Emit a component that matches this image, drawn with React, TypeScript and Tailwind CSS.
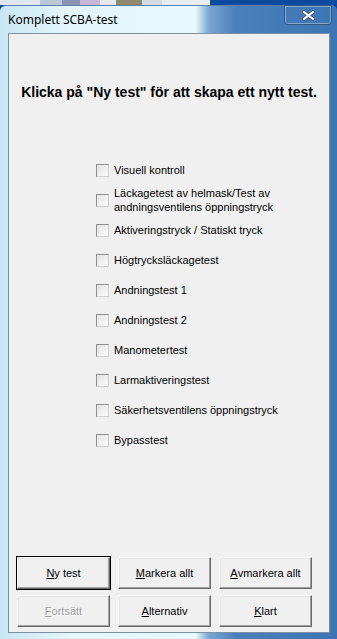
import React from 'react';

const tests: string[][] = [
  ['Visuell kontroll'],
  ['Läckagetest av helmask/Test av', 'andningsventilens öppningstryck'],
  ['Aktiveringstryck / Statiskt tryck'],
  ['Högtrycksläckagetest'],
  ['Andningstest 1'],
  ['Andningstest 2'],
  ['Manometertest'],
  ['Larmaktiveringstest'],
  ['Säkerhetsventilens öppningstryck'],
  ['Bypasstest'],
];

function Btn({ k, rest, primary, disabled }: { k: string; rest: string; primary?: boolean; disabled?: boolean }) {
  return (
    <div className={primary ? 'border border-black' : 'border border-transparent'}>
      <button
        className={`flex h-[32px] w-full items-center justify-center border border-t-white border-l-white border-r-[#696969] border-b-[#696969] bg-[#f0f0f0] text-[11px] shadow-[inset_-1px_-1px_#a0a0a0,inset_1px_1px_#e3e3e3] ${
          disabled ? 'text-[#a0a0a0] [text-shadow:1px_1px_0_#fff]' : 'text-black'
        }`}
      >
        <span className="underline">{k}</span>
        {rest}
      </button>
    </div>
  );
}

function Check({ lines }: { lines: string[] }) {
  return (
    <div className="flex h-[30px] items-center gap-[5px]">
      <div className="h-[13px] w-[13px] shrink-0 border border-t-[#8e8f8f] border-l-[#8e8f8f] border-r-[#cfcfcf] border-b-[#cfcfcf] bg-gradient-to-br from-[#e2e2e2] to-[#fcfcfc]" />
      <div className="text-[11px] leading-[14px] text-black">
        {lines.map(l => (
          <div key={l}>{l}</div>
        ))}
      </div>
    </div>
  );
}

export default function App() {
  return (
    <div className="flex h-[639px] w-[337px] flex-col overflow-hidden bg-[#0b4a9c] font-['Liberation_Sans',Arial,sans-serif]">
      {/* desktop behind the window */}
      <div className="flex h-[5px] shrink-0">
        <div className="w-[40px] bg-[#dfe8ef]" />
        <div className="w-[22px] bg-[#b9c7d6]" />
        <div className="w-[18px] bg-[#8a93b5]" />
        <div className="w-[20px] bg-[#c8b8d6]" />
        <div className="w-[16px] bg-[#e7e9ee]" />
        <div className="w-[26px] bg-[#8d8a6e]" />
        <div className="w-[20px] bg-[#d6dbe2]" />
        <div className="w-[48px] bg-[#e9edf1]" />
        <div className="flex-1 bg-[#0b4a9c]" />
      </div>

      {/* window frame */}
      <div className="flex flex-1 flex-col rounded-t-[6px] border-t border-[#5d7fa3] bg-[linear-gradient(to_right,#c9e6f4_0%,#e4f6fc_20%,#e8f9fd_58%,#7aa6d2_62%,#4a80bb_70%,#3d75b3_100%)]">
        <div className="relative flex h-[27px] shrink-0 items-center pl-[8px]">
          <span className="font-['Noto_Sans',sans-serif] text-[12px] text-black">Komplett SCBA-test</span>
          <div className="absolute right-[5px] top-[-1px] flex h-[20px] w-[48px] items-center justify-center rounded-b-[4px] border border-[#2f5a8c] shadow-[inset_0_0_0_1px_rgba(255,255,255,0.35)]">
            <svg width="13" height="11" viewBox="0 0 13 11">
              <path d="M2 2 L11 9 M11 2 L2 9" stroke="#3a4d66" strokeWidth="3.6" strokeLinecap="square" />
              <path d="M2 2 L11 9 M11 2 L2 9" stroke="#ffffff" strokeWidth="2.2" strokeLinecap="square" />
            </svg>
          </div>
        </div>

        <div className="mb-[6px] ml-[8px] mr-[7px] flex flex-1 flex-col border border-[#7b8fa5] bg-[#f0f0f0]">
          <div className="pt-[50px] text-center text-[14px] font-bold leading-[16px] text-black">
            Klicka på "Ny test" för att skapa ett nytt test.
          </div>

          <div className="ml-[87px] mt-[55px] flex flex-col">
            {tests.map(t => (
              <Check key={t[0]} lines={t} />
            ))}
          </div>

          <div className="flex-1" />

          <div className="grid grid-cols-3 gap-x-[6px] gap-y-[4px] pb-[4px] pl-[7px] pr-[16px]">
            <Btn k="N" rest="y test" primary />
            <Btn k="M" rest="arkera allt" />
            <Btn k="A" rest="vmarkera allt" />
            <Btn k="F" rest="ortsätt" disabled />
            <Btn k="A" rest="lternativ" />
            <Btn k="K" rest="lart" />
          </div>
        </div>
      </div>
    </div>
  );
}
